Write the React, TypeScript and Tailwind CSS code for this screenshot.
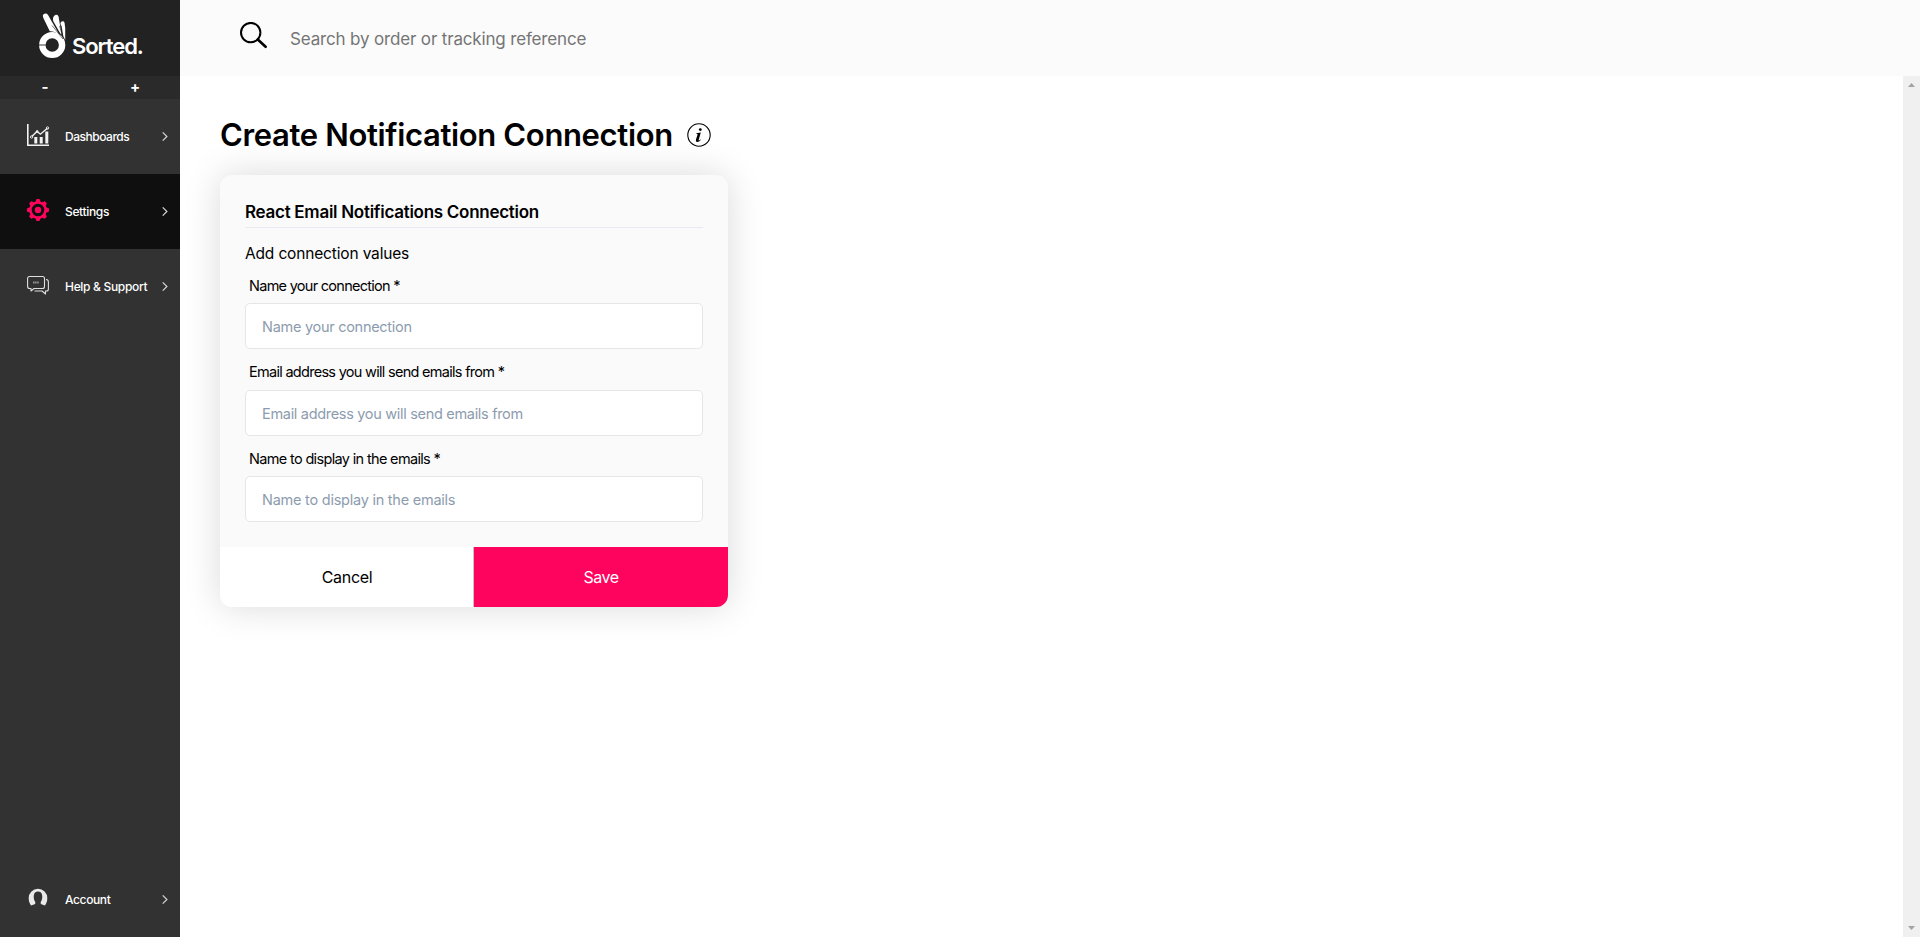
import React from "react";

const navIcon = "-mt-[3px] h-[22px] w-[22px] shrink-0 overflow-visible";

function Chevron() {
  return (
    <svg viewBox="0 0 6 9" className="h-[9px] w-[6px]" fill="none" stroke="#d4d4d4" strokeWidth="1.2">
      <path d="M.7 .4 4.9 4.5.7 8.6" />
    </svg>
  );
}

function DashboardIcon() {
  return (
    <svg viewBox="0 0 22 22" className={navIcon} fill="none" stroke="#f2f2f2">
      <path d="M.8 0V21.2H22" strokeWidth="1.6" />
      <path d="M4.8 12.6 10 7.4 13.4 10.2 20.4 4.2" strokeWidth="1.4" />
      <path d="M8.8 19.6V13M14.2 19.6V13M19.8 19.6V7.5" strokeWidth="3" />
      <circle cx="4.6" cy="13" r="1.2" strokeWidth=".9" />
      <circle cx="20.5" cy="4" r="1.2" strokeWidth=".9" />
      <circle cx="10.2" cy="7.4" r="1" fill="#f2f2f2" strokeWidth=".5" />
    </svg>
  );
}

function GearIcon() {
  return (
    <svg viewBox="-11 -11 22 22" className={navIcon} fill="none" stroke="#ff045e">
      <circle r="7.5" strokeWidth="2.4" />
      <circle r="3.2" fill="#ff045e" stroke="none" />
      {[0, 45, 90, 135, 180, 225, 270, 315].map((a) => (
        <path key={a} d="M-2.7-8 -1.5-11H1.5L2.7-8Z" fill="#ff045e" stroke="none" transform={`rotate(${a})`} />
      ))}
    </svg>
  );
}

function ChatIcon() {
  return (
    <svg viewBox="0 0 22 22" className={navIcon} fill="none" stroke="#dedede" strokeWidth="1.1" strokeLinejoin="round">
      <path d="M2.5 2.5H15.5Q17.5 2.5 17.5 4.5V12.5Q17.5 14.5 15.5 14.5H7L4 17V14.5H2.5Q.6 14.5.6 12.5V4.5Q.6 2.5 2.5 2.5Z" />
      <path d="M19 5.5Q21.4 5.6 21.4 8V15Q21.4 17 19.5 17H18.5V20L15 17H7.5" />
      <path d="M6 8.5H12" strokeWidth="1.8" strokeDasharray="1.5 .6" stroke="#9a9a9a" />
    </svg>
  );
}

function AccountIcon() {
  return (
    <svg viewBox="0 0 22 22" className={navIcon} fill="#e9e9e9">
      <path d="M4 18.4C2.2 16 1.7 13.6 1.7 11A9.3 9.3 0 0 1 20.3 11C20.3 13.6 19.8 16 18 18.4L14.3 17.2C13.3 16.6 13.5 15.6 14 14.6C15.4 12.4 15.4 10 15.1 8C14.6 5.2 13 4.4 11 4.4S7.4 5.2 6.9 8C6.6 10 6.6 12.4 8 14.6C8.5 15.6 8.7 16.6 7.7 17.2Z" />
    </svg>
  );
}

function Logo() {
  return (
    <svg viewBox="0 0 27 46" className="h-[46px] w-[27px] shrink-0" fill="#fff">
      <circle cx="13.2" cy="32" r="9.9" fill="none" stroke="#fff" strokeWidth="6.4" />
      <path d="M4.6 1.2C6.3-.2 8.2.5 9.2 2.2L19 19.5 20.4 22C16.5 18.6 13 18 10.8 18.2L4.6 5.5C3.8 3.6 3.4 2.2 4.6 1.2Z" />
      <path d="M14.9 3.2C16.6.8 19.2 1.3 19.6 3.8L22.6 21.4 21.3 20.6 14.3 8.2C13.8 6.2 13.8 4.6 14.9 3.2Z" />
      <path d="M21.7 9.6C22.8 7.8 25.2 8 25.6 10L26.2 15V27L24.3 23.2 22.6 13C21.5 11.6 21.2 10.6 21.7 9.6Z" />
      <path d="M0 32H6.8" stroke="#222" strokeWidth=".9" />
      <path d="M13 12.5 24 26M20.6 13 24.4 26" stroke="#222" strokeWidth=".6" />
    </svg>
  );
}

function NavItem({ icon, label, active, tracking }: { icon: React.ReactNode; label: string; active?: boolean; tracking: string }) {
  return (
    <a className={`flex h-[75px] shrink-0 items-center pl-[27px] pr-3 ${active ? "bg-[#0f0f0f]" : ""}`}>
      {icon}
      <span className={`ml-4 flex-1 whitespace-nowrap pt-px text-[12px] leading-4 font-medium text-white ${tracking}`}>{label}</span>
      <Chevron />
    </a>
  );
}

type FieldProps = { label: string; rowClass: string; labelClass: string; inputClass: string; name: string };

function Field({ label, rowClass, labelClass, inputClass, name }: FieldProps) {
  return (
    <div className={rowClass}>
      <label htmlFor={name} className={`block whitespace-nowrap pl-1 text-[14.5px] leading-[24px] text-black ${labelClass}`}>
        {label} *
      </label>
      <input
        id={name}
        placeholder={label}
        className={`block h-[46px] w-full rounded-[5px] border border-[#e6e6e6] bg-white px-4 text-[14.5px] outline-none placeholder:text-[#8c9cae] ${inputClass}`}
      />
    </div>
  );
}

export default function App() {
  return (
    <div className="flex h-[937px] w-full overflow-hidden bg-white font-['Inter',sans-serif] text-black">
      <aside className="flex w-[180px] shrink-0 flex-col bg-[#323232]">
        <div className="flex h-[76px] shrink-0 bg-[#222] pl-[39px] pt-[13px]">
          <Logo />
          <span className="ml-[6px] mt-[18px] text-[22px] leading-[30px] font-semibold tracking-[-1.05px] text-white">Sorted.</span>
        </div>
        <div className="flex h-[23px] shrink-0 items-center bg-[#2a2a2a] pb-[2px] text-center text-[15px] leading-[21px] font-bold text-white">
          <button className="flex-1">-</button>
          <button className="flex-1">+</button>
        </div>
        <NavItem icon={<DashboardIcon />} label="Dashboards" tracking="tracking-[-0.48px]" />
        <NavItem icon={<GearIcon />} label="Settings" active tracking="tracking-[-0.34px]" />
        <NavItem icon={<ChatIcon />} label="Help & Support" tracking="tracking-[-0.31px]" />
        <div className="flex-1" />
        <NavItem icon={<AccountIcon />} label="Account" tracking="tracking-[-0.38px]" />
      </aside>

      <div className="flex min-w-0 flex-1 flex-col">
        <header className="flex h-[76px] shrink-0 bg-[#fbfbfb] pl-[60px]">
          <svg viewBox="0 0 27 27" className="mt-[22px] h-[27px] w-[27px]" fill="none" stroke="#000">
            <circle cx="10.7" cy="10.6" r="9.7" strokeWidth="2" />
            <path d="M17.8 17.5 25.6 24.8" strokeWidth="2.6" strokeLinecap="round" />
          </svg>
          <input
            placeholder="Search by order or tracking reference"
            className="ml-[23px] mt-[26px] h-[26px] w-[500px] bg-transparent text-[17px] tracking-[-0.16px] outline-none placeholder:text-[#757575]"
          />
        </header>

        <div className="flex min-h-0 flex-1">
          <main className="flex-1 pl-10">
            <div className="flex h-[99px] pt-[38px]">
              <h1 className="whitespace-nowrap text-[31px] leading-[42px] font-semibold tracking-[-0.35px]">Create Notification Connection</h1>
              <svg viewBox="0 0 24 24" className="ml-[14px] mt-[9px] h-6 w-6" fill="none">
                <circle cx="12" cy="12" r="11.2" stroke="#000" strokeWidth="1.1" />
                <circle cx="13.3" cy="6.6" r="1.4" fill="#000" />
                <path d="M9.2 10.2 13.8 9.4 11.6 17.2Q11.6 18 13.6 16.4L14 16.8Q11.6 19.4 9.8 19Q8.4 18.4 9 16.6L10.6 11.4Q10.5 10.6 9.2 10.8Z" fill="#000" />
              </svg>
            </div>

            <section className="flex h-[432px] w-[508px] flex-col overflow-hidden rounded-xl bg-[#fafafa] shadow-[0_0_36px_rgba(0,0,0,0.15)]">
              <div className="flex-1 px-[25px]">
                <h2 className="mt-5 h-[33px] whitespace-nowrap border-b border-[#e9eaef] text-[17px] leading-[34px] font-semibold tracking-[-0.28px]">
                  React Email Notifications Connection
                </h2>
                <p className="mt-[13px] h-[33px] whitespace-nowrap text-[15.5px] leading-[26px] tracking-[-0.16px]">Add connection values</p>
                <Field
                  name="connection"
                  label="Name your connection"
                  rowClass="h-[86px]"
                  labelClass="h-[29px] tracking-[-0.72px]"
                  inputClass="tracking-[-0.28px]"
                />
                <Field
                  name="address"
                  label="Email address you will send emails from"
                  rowClass="h-[87px]"
                  labelClass="h-[30px] tracking-[-0.71px]"
                  inputClass="tracking-[-0.31px]"
                />
                <Field
                  name="display"
                  label="Name to display in the emails"
                  rowClass="h-[75px]"
                  labelClass="h-[29px] tracking-[-0.66px]"
                  inputClass="tracking-[-0.24px]"
                />
              </div>
              <div className="flex h-[60px] shrink-0 text-[16px]">
                <button className="w-[254px] border-r border-[#c4c4c4] bg-white pl-px tracking-[-0.3px]">Cancel</button>
                <button className="w-[254px] bg-[#ff045e] tracking-[-0.5px] text-white">Save</button>
              </div>
            </section>
          </main>

          <div className="flex w-[17px] shrink-0 flex-col items-center justify-between bg-[#f0f0f0] pt-[7px] pb-[7px]">
            <svg viewBox="0 0 7 4" className="h-1 w-[7px]" fill="#a3a3a3"><path d="M0 4 3.5 0 7 4Z" /></svg>
            <svg viewBox="0 0 7 4" className="h-1 w-[7px]" fill="#a3a3a3"><path d="M0 0 3.5 4 7 0Z" /></svg>
          </div>
        </div>
      </div>
    </div>
  );
}
